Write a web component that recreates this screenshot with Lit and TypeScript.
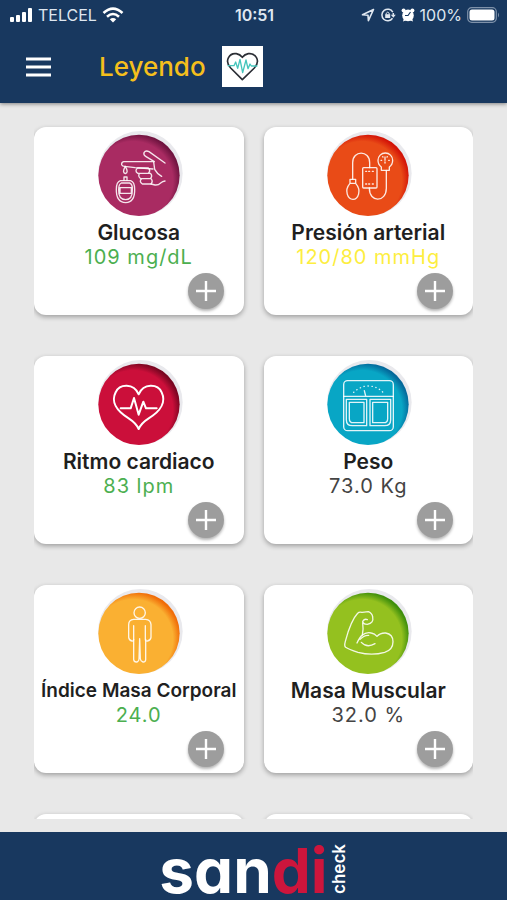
import { LitElement, html, svg, css, nothing, type SVGTemplateResult } from "lit";
import { customElement, property } from "lit/decorators.js";

interface Metric {
  id: string;
  name: string;
  value: string;
  tone: "good" | "warn" | "plain";
  color: string;
  shade: string;
  compact?: boolean;
  art: SVGTemplateResult;
}

const glucose = svg`
  <g transform="translate(-207 -33)">
    <path d="M420 129 L372 95 Q362 90 357 98 Q355 105 362 109 L388 125 H296 Q289 127 290 134 Q292 139 299 139 L330 143 L384 147"/>
    <path d="M386 126 L389 148 Q395 160 410 169"/>
    <path d="M338 144 H370 Q378 152 370 160 H338 Q328 152 338 144 M344 160 H376 Q384 168 376 176 H347 Q337 168 344 160 M350 176 H378 Q385 184 378 192 H352 Q341 184 350 176"/>
    <path d="M378 192 L390 195 Q400 196 407 189 Q413 184 420 183"/>
    <path d="M301 139 Q290 158 301 161 Q312 158 301 139 M297 181 V171 H306 V181"/>
    <path d="M286 182 H317 Q329 186 329 208 Q330 247 302 248 Q273 247 274 208 Q274 186 286 182 Z"/>
    <path d="M289 189 H314 Q323 192 322 209 Q323 238 302 239 Q280 238 281 209 Q281 192 289 189 M285 203 H319 V220 H285 Z"/>
  </g>`;

const pressure = svg`
  <g transform="translate(-205 -33)">
    <path d="M294 178 V128 C294 90 345 90 345 128 V143"/>
    <rect x="324" y="143" width="43" height="61" rx="3"/>
    <path d="M333 154 H336 M342 154 H345 M353 154 H356 M333 192 H336 M342 192 H345 M353 192 H356"/>
    <path d="M344 204 C344 250 395 247 395 205 V151"/>
    <path d="M380 151 V141 Q370 134 370 121 A22 22 0 0 1 414 121 Q414 134 404 141 V151 Z"/>
    <path d="M391 111 V121 M391 126 V129 M379 121 H381 M402 121 H404 M384 110 L385 111 M398 110 L397 111"/>
    <path d="M286 178 H303 V190 H286 Z M286 190 C267 212 280 238 295 238 C310 238 322 212 303 190"/>
  </g>`;

const heart = svg`
  <g class="bold" transform="translate(-207 -30)">
    <path d="M341 237 Q333 219 311 205 C273 182 258 154 272 127 C284 101 326 99 341 133 C356 99 398 101 410 127 C423 154 409 182 371 205 Q349 219 341 237 Z"/>
    <path d="M287 175 H317 L327 144 L341 194 L355 155 L363 175 H395"/>
  </g>`;

const scale = svg`
  <g transform="translate(-205 -30)">
    <rect x="267" y="92" width="149" height="150" rx="12"/>
    <path d="M267 139 H416 M333 138 L329 122"/>
    <path class="dots" d="M297 127 L307 119 L318 113 L329 109 L341 108 L353 109 L365 113 L376 119 L385 127"/>
    <path d="M275 148 H336 V227 H293 Q275 227 275 209 Z M284 157 H328 V218 H296 Q284 218 284 206 Z"/>
    <path d="M346 148 H408 V209 Q408 227 390 227 H346 Z M354 157 H399 V206 Q399 218 387 218 H354 Z"/>
  </g>`;

const person = svg`
  <g transform="translate(-207 -27)">
    <circle cx="344" cy="98" r="17"/>
    <path d="M326 118 H362 Q377 119 378 134 V172 Q377 181 367 183 Q361 184 361 178 V137 M326 118 Q311 119 311 134 V172 Q312 181 321 183 Q326 184 326 178 V137"/>
    <path d="M326 178 V239 Q327 247 336 246 Q342 244 342 237 L344 176 L346 237 Q347 244 354 246 Q361 247 362 239 V178"/>
  </g>`;

const muscle = svg`
  <g transform="translate(-205 -27)">
    <path d="M307 189 Q316 170 322 166 Q335 155 350 159 Q360 161 367 169 Q377 158 393 159 Q415 163 415 185 Q415 209 390 217 Q352 228 310 217 Q281 208 273 202 Q268 198 272 184 C281 150 290 120 309 100 Q313 95 322 97 L341 95 Q353 100 354 111 Q358 129 338 133 Q325 133 324 124 Q330 115 338 119"/>
    <path d="M324 129 Q327 148 323 165 M316 178 Q328 165 342 166 M320 187 Q337 205 361 191"/>
  </g>`;

const METRICS: Metric[] = [
  { id: "glucosa", name: "Glucosa", value: "109 mg/dL", tone: "good", color: "#a92b62", shade: "#701440", art: glucose },
  { id: "presion", name: "Presión arterial", value: "120/80 mmHg", tone: "warn", color: "#e94b17", shade: "#d31408", art: pressure },
  { id: "ritmo", name: "Ritmo cardiaco", value: "83 lpm", tone: "good", color: "#cb0f3a", shade: "#790621", art: heart },
  { id: "peso", name: "Peso", value: "73.0 Kg", tone: "plain", color: "#08a6c5", shade: "#04699b", art: scale },
  { id: "imc", name: "Índice Masa Corporal", value: "24.0", tone: "good", color: "#fab032", shade: "#f06c08", compact: true, art: person },
  { id: "muscular", name: "Masa Muscular", value: "32.0 %", tone: "plain", color: "#94c11f", shade: "#3f8f0c", art: muscle },
];

@customElement("metric-card")
export class MetricCard extends LitElement {
  @property({ attribute: false }) metric?: Metric;

  static styles = css`
    :host {
      display: flex;
      flex-direction: column;
      align-items: center;
      box-sizing: border-box;
      min-width: 0;
      min-height: 188px;
      padding: 4px 0 6px;
      background: #fff;
      border-radius: 12px;
      box-shadow: 0 2px 5px rgba(0, 0, 0, 0.32);
    }
    .badge {
      width: 90px;
      height: 90px;
      flex: none;
    }
    .art {
      fill: none;
      stroke: #fff;
      stroke-opacity: 0.88;
      stroke-width: 4;
      stroke-linejoin: round;
      stroke-linecap: round;
    }
    .bold {
      stroke-width: 6;
      stroke-opacity: 1;
    }
    .dots {
      stroke-dasharray: 1 11;
    }
    .name {
      margin: 0;
      font-size: 21px;
      line-height: 24px;
      font-weight: 600;
      color: #1f1f1f;
      white-space: nowrap;
    }
    .compact {
      font-size: 19px;
    }
    .value {
      margin: 0;
      font-size: 20px;
      line-height: 24px;
      letter-spacing: 1px;
      white-space: nowrap;
    }
    .good {
      color: #4caf50;
    }
    .warn {
      color: #fdee3f;
    }
    .plain {
      color: #444;
    }
    .add {
      display: grid;
      place-items: center;
      align-self: flex-end;
      width: 36px;
      height: 36px;
      margin: 4px 20px 0 0;
      padding: 0;
      border: 0;
      border-radius: 50%;
      background: #9d9d9d;
      box-shadow: 0 2px 3px rgba(0, 0, 0, 0.3);
      cursor: pointer;
    }
  `;

  render() {
    const m = this.metric;
    if (!m) return nothing;
    return html`
      <svg class="badge" viewBox="0 0 270 270" aria-hidden="true">
        <defs>
          <radialGradient id="fill" cx="0.43" cy="0.57" r="0.58">
            <stop offset="0.84" stop-color=${m.color} />
            <stop offset="1" stop-color=${m.shade} />
          </radialGradient>
        </defs>
        <circle cx="139" cy="127" r="127" fill="#e9e9ed" />
        <circle cx="135" cy="133" r="122" fill="url(#fill)" />
        <g class="art">${m.art}</g>
      </svg>
      <h2 class="name ${m.compact ? "compact" : ""}">${m.name}</h2>
      <p class="value ${m.tone}">${m.value}</p>
      <button class="add" aria-label="Agregar ${m.name}">
        <svg width="20" height="20" viewBox="0 0 20 20" aria-hidden="true">
          <path d="M10 0 V20 M0 10 H20" stroke="#fff" stroke-width="2.4" />
        </svg>
      </button>
    `;
  }
}

@customElement("app-root")
export class AppRoot extends LitElement {
  static styles = css`
    :host {
      display: flex;
      flex-direction: column;
      height: 100vh;
      overflow: hidden;
      background: #e8e8e8;
      font-family: Inter, "Liberation Sans", sans-serif;
    }
    .top {
      flex: none;
      background: #18385f;
      color: #fff;
      box-shadow: 0 1px 4px rgba(0, 0, 0, 0.45);
    }
    .status {
      display: grid;
      grid-template-columns: 1fr auto 1fr;
      align-items: center;
      height: 30px;
      padding: 0 7px 0 9px;
      font-size: 16px;
      line-height: 20px;
      color: #dfe7f0;
    }
    .side {
      display: flex;
      align-items: center;
      gap: 5px;
    }
    .end {
      justify-content: flex-end;
    }
    .time {
      font-weight: 600;
    }
    .bar {
      display: flex;
      align-items: center;
      height: 73px;
      padding: 0 24px;
      box-sizing: border-box;
    }
    .menu {
      display: grid;
      padding: 0;
      margin-right: 46px;
      border: 0;
      background: none;
      cursor: pointer;
    }
    .title {
      margin: 0 16px 0 0;
      font-size: 26px;
      line-height: 32px;
      font-weight: 500;
      color: #f5bf1c;
    }
    .cards {
      flex: 1;
      min-height: 0;
      overflow: hidden;
      display: grid;
      grid-template-columns: repeat(2, minmax(0, 1fr));
      grid-auto-rows: max-content;
      gap: 41px 20px;
      margin: 0 34px 13px;
      padding-top: 24px;
    }
    .foot {
      flex: none;
      display: flex;
      justify-content: center;
      align-items: flex-end;
      height: 68px;
      background: #18385f;
      color: #fff;
    }
    .brand {
      display: flex;
      align-items: flex-end;
      gap: 2px;
    }
    .word {
      font-size: 62px;
      line-height: 58px;
      font-weight: 700;
      font-feature-settings: "cv11";
    }
    .accent {
      color: #cd153c;
    }
    .check {
      writing-mode: vertical-rl;
      transform: rotate(180deg);
      font-size: 17px;
      line-height: 18px;
      font-weight: 600;
      padding-top: 6px;
    }
  `;

  render() {
    return html`
      <header class="top">
        <div class="status">
          <div class="side">
            <svg width="24" height="16" viewBox="0 0 24 16" fill="#fff" aria-hidden="true">
              <rect x="1" y="10" width="4" height="5" rx="1" />
              <rect x="7" y="8" width="4" height="7" rx="1" />
              <rect x="13" y="5" width="4" height="10" rx="1" />
              <rect x="19" y="1" width="4" height="14" rx="1" />
            </svg>
            <span>TELCEL</span>
            <svg width="22" height="16" viewBox="0 0 22 16" fill="none" stroke="#fff" stroke-width="2.6" aria-hidden="true">
              <path d="M1.5 6 Q11 -2.6 20.500 6 M5 9.700 Q11 4.300 17 9.700" />
              <path d="M11 15.500 L7.800 12.300 Q11 9.600 14.200 12.300 Z" fill="#fff" stroke="none" />
            </svg>
          </div>
          <span class="time">10:51</span>
          <div class="side end">
            <svg width="14" height="14" viewBox="0 0 14 14" fill="none" stroke="#dfe7f0" stroke-width="1.6" stroke-linejoin="round" aria-hidden="true">
              <path d="M12.500 1.500 L1.500 6.800 L7 7.200 L7.400 12.600 Z" />
            </svg>
            <svg width="16" height="14" viewBox="0 0 16 14" fill="none" stroke="#dfe7f0" stroke-width="1.5" aria-hidden="true">
              <path d="M12.800 4.200 A5.800 5.800 0 1 0 12.500 10.300 M13.300 5 V8" />
              <path d="M10.800 6.800 H15.800 L13.300 9.800 Z" fill="#dfe7f0" stroke="none" />
              <rect x="5.200" y="6.200" width="5" height="3.800" fill="#dfe7f0" stroke="none" />
              <path d="M6.200 6.500 V5.300 Q7.700 3 9.200 5.300 V6.500" stroke-width="1" />
            </svg>
            <svg width="14" height="14" viewBox="0 0 14 14" aria-hidden="true">
              <g fill="#fff">
                <circle cx="7" cy="7.400" r="5.800" />
                <circle cx="2.600" cy="2.600" r="2" />
                <circle cx="11.400" cy="2.600" r="2" />
                <path d="M2 13.600 L3 10 L6 12 Z M12 13.600 L11 10 L8 12 Z" />
              </g>
              <path d="M9.500 4 L7 7.500 H4" fill="none" stroke="#18385f" stroke-width="1.2" />
            </svg>
            <span>100%</span>
            <svg width="33" height="16" viewBox="0 0 33 16" aria-hidden="true">
              <rect x="0.700" y="0.700" width="28.600" height="14.600" rx="4" fill="none" stroke="#7e91a9" stroke-width="1.200" />
              <rect x="2.500" y="2.500" width="25" height="11" rx="2.500" fill="#fff" />
              <path d="M31 5.500 Q33 8 31 10.500 Z" fill="#7e91a9" />
            </svg>
          </div>
        </div>
        <div class="bar">
          <button class="menu" aria-label="Menú">
            <svg width="29" height="24" viewBox="0 0 29 24" aria-hidden="true">
              <path d="M2 4 H27 M2 12 H27 M2 20 H27" stroke="#fff" stroke-width="2.800" />
            </svg>
          </button>
          <h1 class="title">Leyendo</h1>
          <svg width="41" height="41" viewBox="0 0 123 123" role="img" aria-label="Salud">
            <rect width="123" height="123" fill="#fff" />
            <g fill="none" stroke-linejoin="round">
              <path d="M61 101 L26 66 C5 43 24 20 43 23 Q54 25 61 34 Q68 25 79 23 C99 20 118 43 97 66 Z" stroke="#2b2e35" stroke-width="5" />
              <path d="M17 59 H36 L41 48 L47 67 L54 40 L62 80 L72 42 L78 68 L84 54 L88 60 H106" stroke="#45c5bc" stroke-width="4" />
            </g>
          </svg>
        </div>
      </header>
      <main class="cards">
        ${METRICS.map((m) => html`<metric-card id=${m.id} .metric=${m}></metric-card>`)}
        <metric-card></metric-card>
        <metric-card></metric-card>
      </main>
      <footer class="foot">
        <div class="brand">
          <span class="word">san<span class="accent">di</span></span>
          <span class="check">check</span>
        </div>
      </footer>
    `;
  }
}
